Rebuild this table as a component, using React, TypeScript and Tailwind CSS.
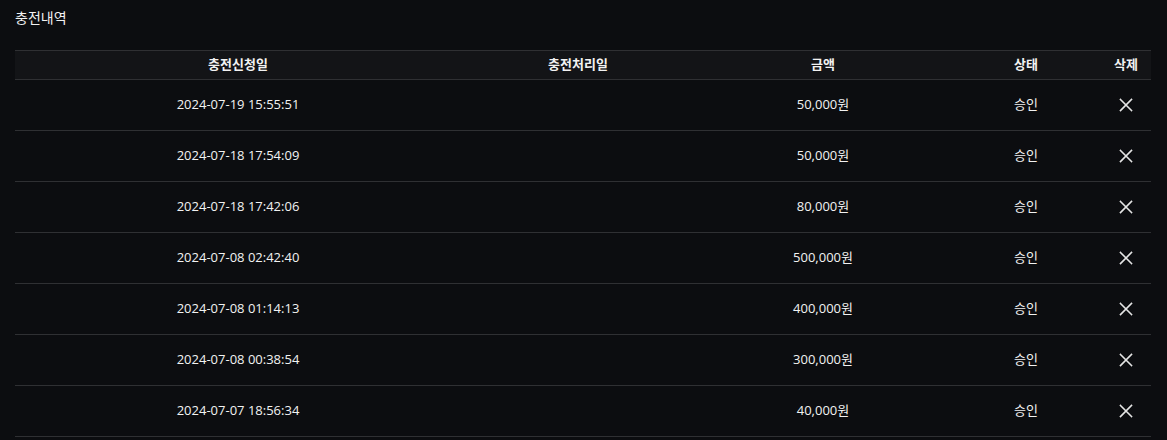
import type { JSX } from "react";

type Charge = {
	requested: string;
	processed: string;
	amount: string;
	status: string;
};

const rows: Charge[] = [
	{ requested: "2024-07-19 15:55:51", processed: "", amount: "50,000원", status: "승인" },
	{ requested: "2024-07-18 17:54:09", processed: "", amount: "50,000원", status: "승인" },
	{ requested: "2024-07-18 17:42:06", processed: "", amount: "80,000원", status: "승인" },
	{ requested: "2024-07-08 02:42:40", processed: "", amount: "500,000원", status: "승인" },
	{ requested: "2024-07-08 01:14:13", processed: "", amount: "400,000원", status: "승인" },
	{ requested: "2024-07-08 00:38:54", processed: "", amount: "300,000원", status: "승인" },
	{ requested: "2024-07-07 18:56:34", processed: "", amount: "40,000원", status: "승인" },
];

function CloseIcon(): JSX.Element {
	return (
		<svg width="14" height="14" viewBox="0 0 14 14" className="mx-auto block">
			<path d="M1.5 1.5 L12.5 12.5 M12.5 1.5 L1.5 12.5" stroke="#e5e5e5" strokeWidth="1.6" strokeLinecap="square" />
		</svg>
	);
}

export default function App(): JSX.Element {
	return (
		<div
			className="h-[440px] w-full overflow-hidden bg-[#0c0d10] text-[#f2f2f2]"
			style={{ fontFamily: '"Open Sans", "Noto Sans CJK KR", sans-serif' }}
		>
			<div className="px-[15px] pt-[8px]">
				<h2 className="text-[14px] leading-[20px] font-normal">충전내역</h2>
				<table className="mt-[22px] w-[1136px] table-fixed border-collapse text-[13px]">
					<colgroup>
						<col className="w-[446px]" />
						<col className="w-[234px]" />
						<col className="w-[256px]" />
						<col className="w-[150px]" />
						<col className="w-[50px]" />
					</colgroup>
					<thead>
						<tr className="h-[29px] border-y border-[#2f3033] bg-[#131417]">
							<th className="font-bold">충전신청일</th>
							<th className="font-bold">충전처리일</th>
							<th className="font-bold">금액</th>
							<th className="font-bold">상태</th>
							<th className="font-bold">삭제</th>
						</tr>
					</thead>
					<tbody>
						{rows.map((row, index) => (
							<tr className="h-[51px] border-b border-[#2f3033]" key={index}>
								<td className="text-center">{row.requested}</td>
								<td className="text-center">{row.processed}</td>
								<td className="text-center">{row.amount}</td>
								<td className="text-center">{row.status}</td>
								<td className="text-center">
									<CloseIcon />
								</td>
							</tr>
						))}
					</tbody>
				</table>
			</div>
		</div>
	);
}
